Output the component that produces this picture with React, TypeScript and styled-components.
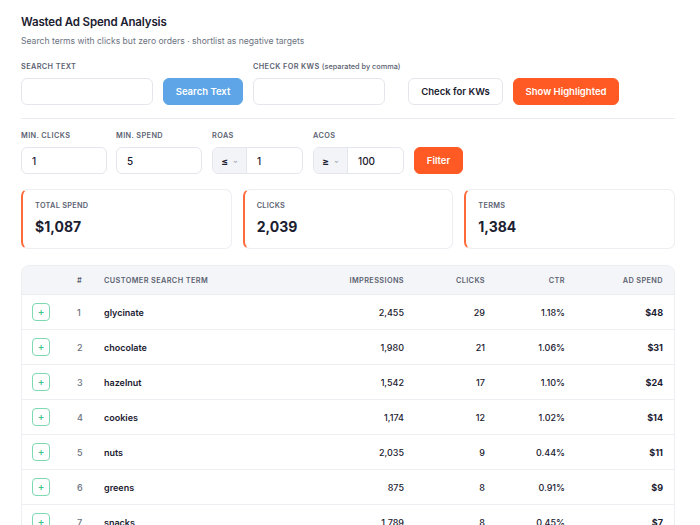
import styled, {createGlobalStyle} from "styled-components";

const GlobalStyle = createGlobalStyle`
  body {
    margin: 0;
    background: #fff;
    font-family: Inter, "Noto Sans", sans-serif;
    color: #1b2030;
  }
`;

const Page = styled.div`
  width: 654px;
  padding: 14px 0 0 21px;
`;

const Title = styled.h1`
  font-size: 11.5px;
  font-weight: 600;
  letter-spacing: -0.15px;
  margin: 0;
  line-height: 17px;
`;

const Subtitle = styled.p`
  font-size: 8.6px;
  color: #6b7280;
  margin: 4px 0 0;
  line-height: 13px;
`;

const ControlRow = styled.div<{$top: number}>`
  display: flex;
  align-items: flex-end;
  gap: 10px;
  margin-top: ${(p) => p.$top}px;
`;

const Field = styled.div<{$w: number}>`
  display: flex;
  flex-direction: column;
  gap: 6px;
  width: ${(p) => p.$w}px;
`;

const Label = styled.label`
  font-size: 7.3px;
  font-weight: 600;
  letter-spacing: 0.4px;
  color: #5b6272;
  text-transform: uppercase;
  line-height: 10px;
  white-space: nowrap;

  span {
    text-transform: none;
    font-weight: 500;
    letter-spacing: 0;
  }
`;

const Input = styled.div`
  height: 27px;
  box-sizing: border-box;
  border: 1px solid #e4e6ec;
  border-radius: 6px;
  background: #fff;
  display: flex;
  align-items: center;
  padding: 0 10px;
  font-size: 10px;
  font-weight: 500;
  overflow: hidden;
`;

const SelectInput = styled(Input)`
  padding: 0;
`;

const Op = styled.div`
  width: 33px;
  flex: none;
  height: 100%;
  background: #f3f4f7;
  border-right: 1px solid #e4e6ec;
  display: flex;
  align-items: center;
  justify-content: center;
  gap: 5px;
  font-size: 10px;
  font-weight: 700;

  small {
    font-size: 6px;
    color: #9aa0ad;
  }
`;

const OpValue = styled.div`
  padding-left: 10px;
`;

const Button = styled.button<{$kind: "blue" | "orange" | "plain"; $w: number; $gap?: number}>`
  height: 27px;
  width: ${(p) => p.$w}px;
  margin-left: ${(p) => p.$gap ?? 0}px;
  border-radius: 6px;
  font-family: inherit;
  font-size: 9.5px;
  font-weight: 600;
  cursor: pointer;
  border: 1px solid
    ${(p) => (p.$kind === "plain" ? "#e4e6ec" : p.$kind === "blue" ? "#5da5e6" : "#ff5a23")};
  background: ${(p) => (p.$kind === "plain" ? "#fff" : p.$kind === "blue" ? "#5da5e6" : "#ff5a23")};
  color: ${(p) => (p.$kind === "plain" ? "#1b2030" : "#fff")};
`;

const Divider = styled.hr`
  border: none;
  border-top: 1px solid #e9ebf0;
  margin: 13px 0 0;
`;

const Cards = styled.div`
  display: grid;
  grid-template-columns: repeat(3, 1fr);
  gap: 11px;
  margin-top: 15px;
`;

const Card = styled.div`
  height: 60px;
  box-sizing: border-box;
  border: 1px solid #eceef2;
  border-left: 2px solid #ff6a3a;
  border-radius: 7px;
  padding: 11px 12px;
`;

const CardLabel = styled.div`
  font-size: 7.3px;
  font-weight: 600;
  letter-spacing: 0.3px;
  color: #5b6272;
  line-height: 10px;
`;

const CardValue = styled.div`
  font-size: 14px;
  font-weight: 700;
  margin-top: 6px;
  line-height: 20px;
`;

const TableWrap = styled.div`
  margin-top: 16px;
  border: 1px solid #eceef2;
  border-radius: 8px 8px 0 0;
  overflow: hidden;
`;

const Table = styled.table`
  width: 100%;
  table-layout: fixed;
  border-collapse: collapse;
  font-size: 9px;
`;

const Th = styled.th<{$align?: string}>`
  height: 28px;
  background: #f4f5f8;
  font-size: 7.3px;
  font-weight: 600;
  letter-spacing: 0.4px;
  color: #5b6272;
  text-align: ${(p) => p.$align ?? "left"};
  padding: 0 10px;
  border-bottom: 1px solid #eceef2;
  white-space: nowrap;

  &:last-child {
    padding-right: 11px;
  }
`;

const Td = styled.td<{$align?: string; $weight?: number; $muted?: boolean}>`
  height: 34px;
  border-bottom: 1px solid #eceef2;
  text-align: ${(p) => p.$align ?? "left"};
  font-weight: ${(p) => p.$weight ?? 500};
  color: ${(p) => (p.$muted ? "#6b7280" : "#1b2030")};
  padding: 0 10px;

  &:last-child {
    padding-right: 11px;
  }
`;

const AddButton = styled.div`
  width: 16px;
  height: 16px;
  border: 1px solid #7ed9b3;
  border-radius: 4px;
  color: #3cc48a;
  font-size: 10px;
  line-height: 15px;
  text-align: center;
`;

const columns = [45, 27, 199, 121, 81, 80, 99];

const rows = [
  ["glycinate", "2,455", "29", "1.18%", "$48"],
  ["chocolate", "1,980", "21", "1.06%", "$31"],
  ["hazelnut", "1,542", "17", "1.10%", "$24"],
  ["cookies", "1,174", "12", "1.02%", "$14"],
  ["nuts", "2,035", "9", "0.44%", "$11"],
  ["greens", "875", "8", "0.91%", "$9"],
  ["snacks", "1,789", "8", "0.45%", "$7"],
];

export default function App() {
  return (
    <Page>
      <GlobalStyle />
      <Title>Wasted Ad Spend Analysis</Title>
      <Subtitle>Search terms with clicks but zero orders · shortlist as negative targets</Subtitle>

      <ControlRow $top={14}>
        <Field $w={132}>
          <Label>Search Text</Label>
          <Input />
        </Field>
        <Button $kind="blue" $w={80}>Search Text</Button>
        <Field $w={132}>
          <Label>
            Check for KWs <span>(separated by comma)</span>
          </Label>
          <Input />
        </Field>
        <Button $kind="plain" $w={95} $gap={13}>Check for KWs</Button>
        <Button $kind="orange" $w={106}>Show Highlighted</Button>
      </ControlRow>

      <Divider />

      <ControlRow $top={12}>
        <Field $w={86}>
          <Label>Min. Clicks</Label>
          <Input>1</Input>
        </Field>
        <Field $w={86} style={{marginLeft: -1}}>
          <Label>Min. Spend</Label>
          <Input>5</Input>
        </Field>
        <Field $w={91}>
          <Label>ROAS</Label>
          <SelectInput>
            <Op>≤ <small>⌄</small></Op>
            <OpValue>1</OpValue>
          </SelectInput>
        </Field>
        <Field $w={91}>
          <Label>ACOS</Label>
          <SelectInput>
            <Op>≥ <small>⌄</small></Op>
            <OpValue>100</OpValue>
          </SelectInput>
        </Field>
        <Button $kind="orange" $w={49}>Filter</Button>
      </ControlRow>

      <Cards>
        <Card>
          <CardLabel>TOTAL SPEND</CardLabel>
          <CardValue>$1,087</CardValue>
        </Card>
        <Card>
          <CardLabel>CLICKS</CardLabel>
          <CardValue>2,039</CardValue>
        </Card>
        <Card>
          <CardLabel>TERMS</CardLabel>
          <CardValue>1,384</CardValue>
        </Card>
      </Cards>

      <TableWrap>
        <Table>
          <colgroup>
            {columns.map((w, i) => (
              <col key={i} style={{width: w}} />
            ))}
          </colgroup>
          <thead>
            <tr>
              <Th />
              <Th>#</Th>
              <Th>CUSTOMER SEARCH TERM</Th>
              <Th $align="right">IMPRESSIONS</Th>
              <Th $align="right">CLICKS</Th>
              <Th $align="right">CTR</Th>
              <Th $align="right">AD SPEND</Th>
            </tr>
          </thead>
          <tbody>
            {rows.map((r, i) => (
              <tr key={r[0]}>
                <Td>
                  <AddButton>+</AddButton>
                </Td>
                <Td $muted>{i + 1}</Td>
                <Td $weight={600}>{r[0]}</Td>
                <Td $align="right">{r[1]}</Td>
                <Td $align="right">{r[2]}</Td>
                <Td $align="right">{r[3]}</Td>
                <Td $align="right" $weight={700}>{r[4]}</Td>
              </tr>
            ))}
          </tbody>
        </Table>
      </TableWrap>
    </Page>
  );
}
